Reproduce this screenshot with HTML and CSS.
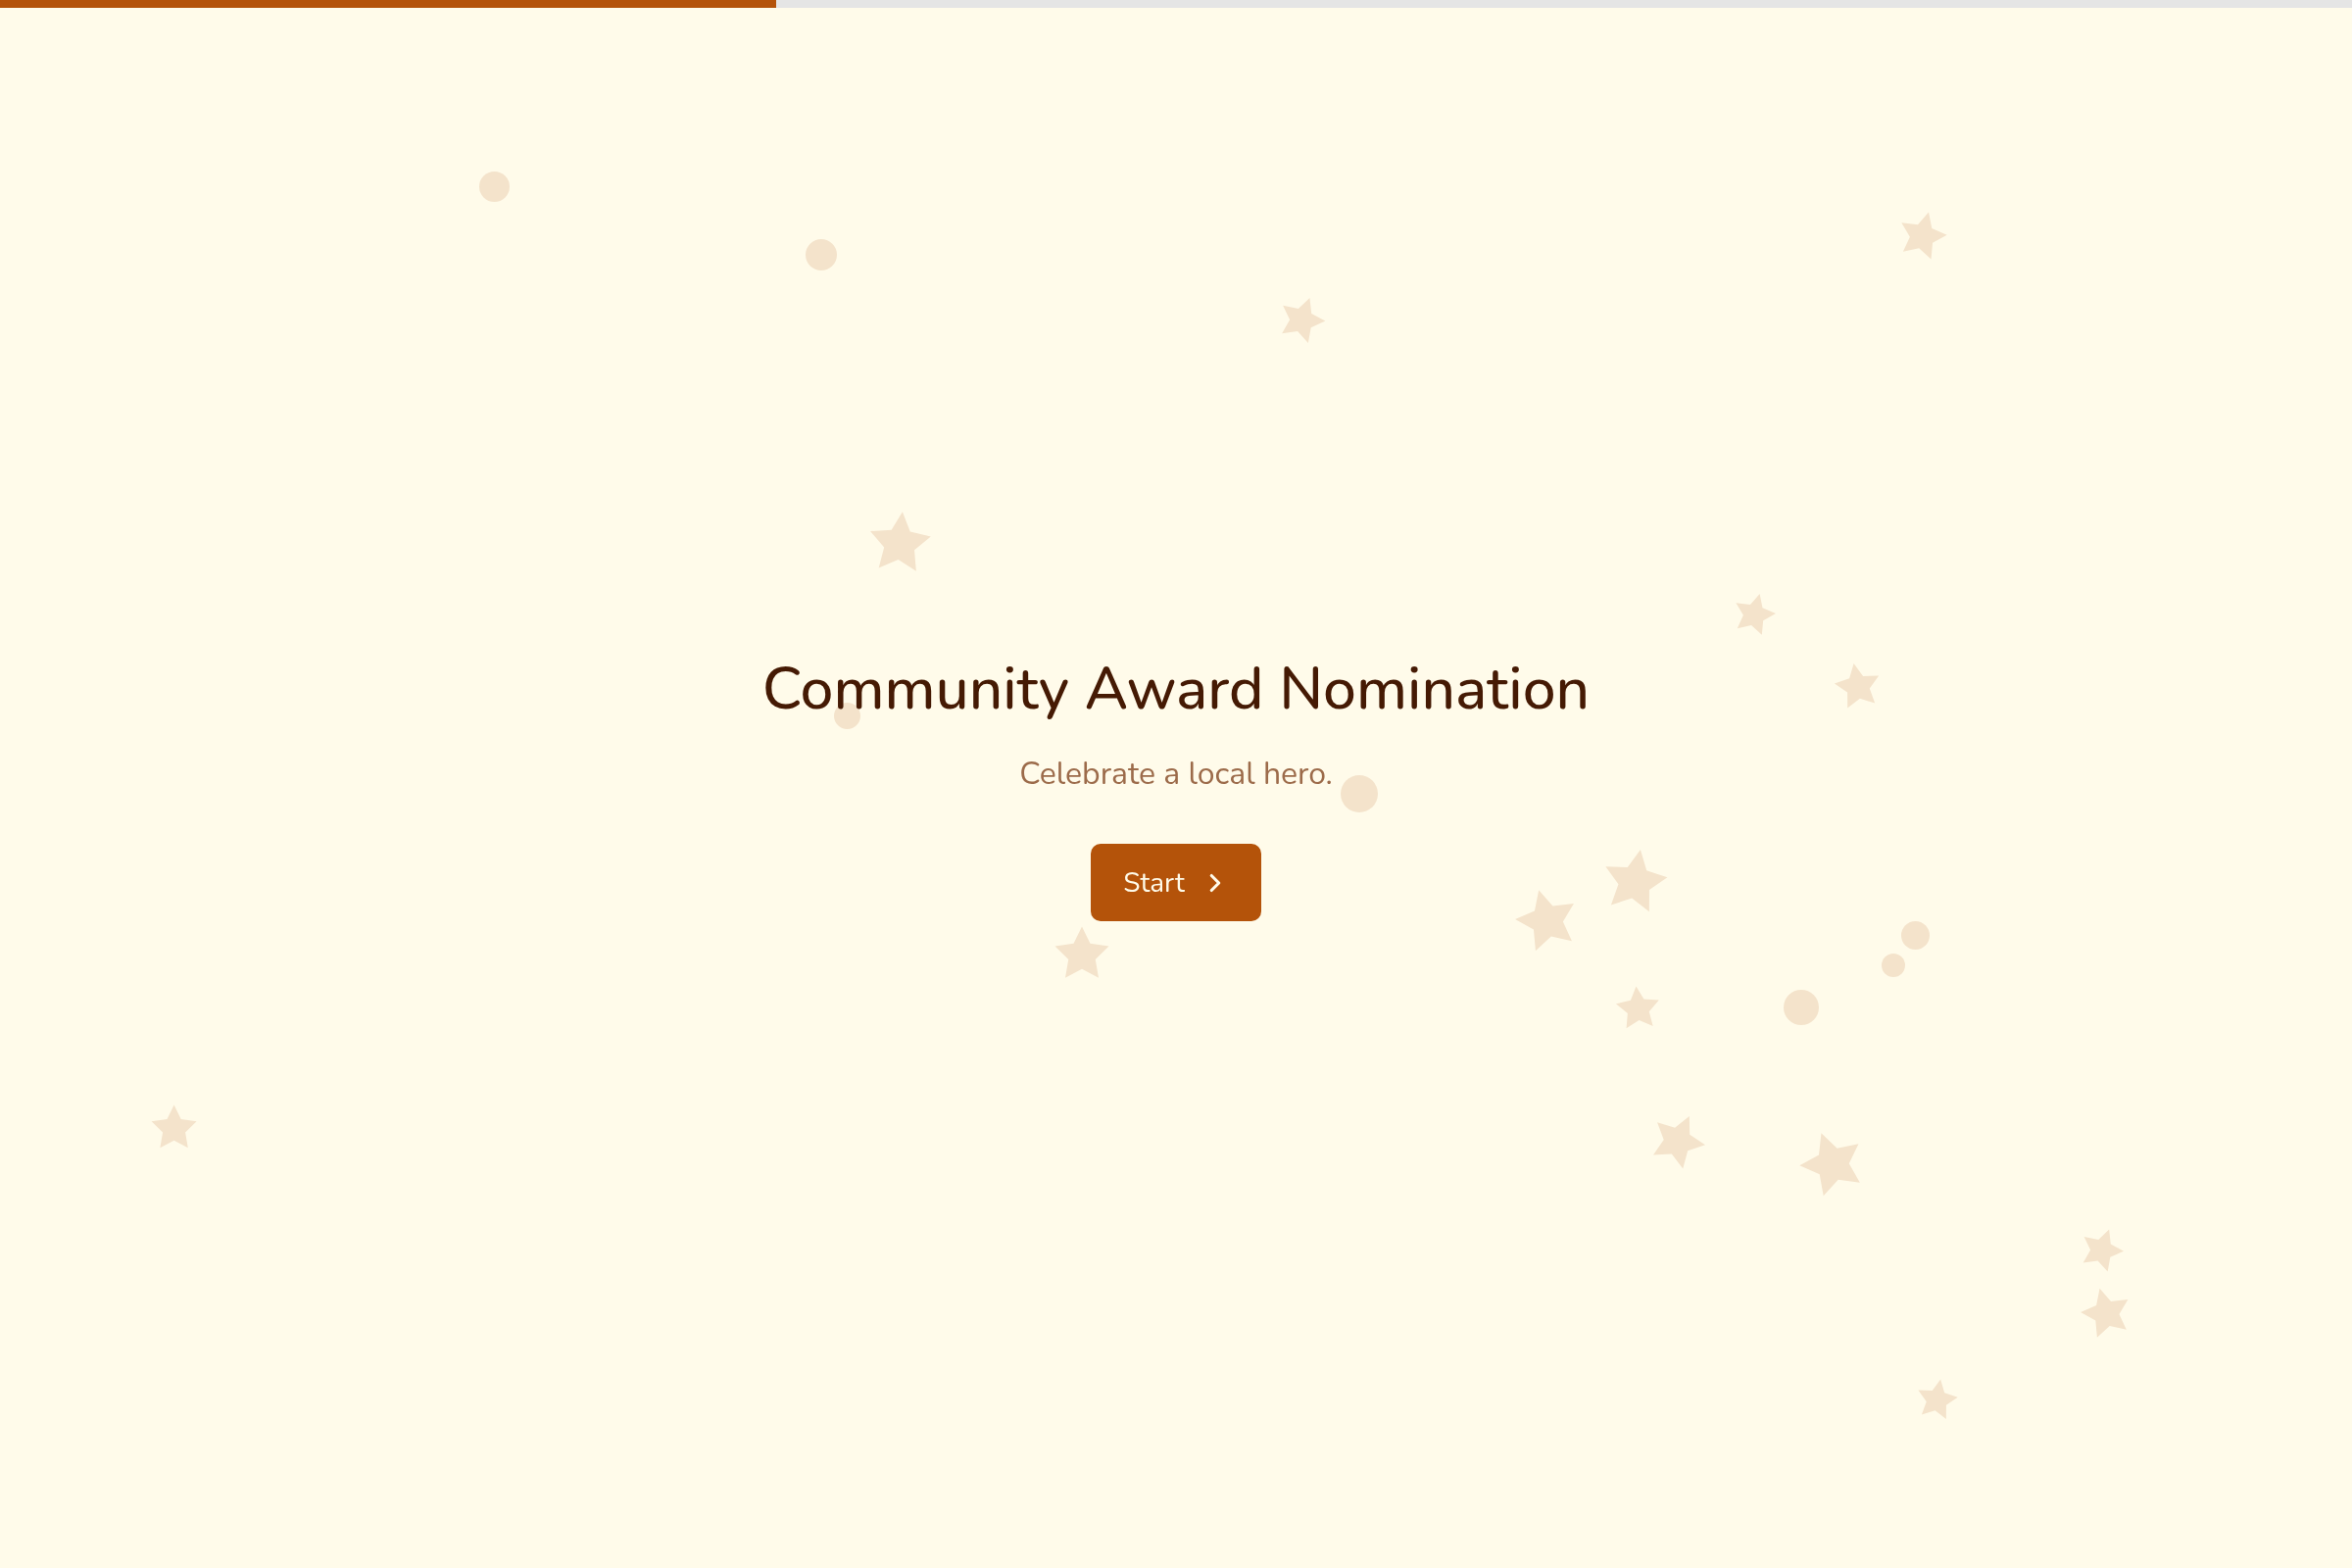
FILE: index.html
```html
<!DOCTYPE html>
<html lang="en">

<head>
    <meta charset="UTF-8">
    <meta name="viewport" content="width=device-width, initial-scale=1.0">
    <title>Community Award Nomination</title>
    <link rel="stylesheet" href="styles.css">
</head>

<body>
    <div class="progress">
        <div class="progress-fill" style="width: 33%"></div>
    </div>

    <div class="confetti" id="confetti"></div>

    <main class="intro">
        <h1 class="intro-title">Community Award Nomination</h1>
        <p class="intro-sub">Celebrate a local hero.</p>
        <button type="button" class="start-btn">
            <span>Start</span>
            <svg class="start-icon" viewBox="0 0 24 24" fill="none" stroke="currentColor" stroke-width="2.5"
                stroke-linecap="round" stroke-linejoin="round">
                <path d="M9 6l6 6-6 6" />
            </svg>
        </button>
    </main>

    <script>
        // background stars: x, y, size, rotation
        var stars = [
            [1329, 326, 46, 20], [1962, 240, 48, 15], [918, 553, 62, 5],
            [1790, 626, 42, 15], [1896, 700, 46, -10], [1668, 898, 64, 10],
            [1578, 938, 62, -15], [1104, 973, 55, 0], [1671, 1028, 44, -5],
            [178, 1151, 46, 0], [1712, 1163, 54, 25], [1869, 1186, 64, -20],
            [2145, 1275, 43, 20], [2149, 1339, 50, -15], [1977, 1428, 41, 10]
        ];
        // background dots: x, y, diameter
        var dots = [
            [504, 190, 31], [838, 260, 32], [864, 730, 27], [1387, 810, 38],
            [1954, 954, 29], [1932, 985, 24], [1838, 1028, 36]
        ];

        var layer = document.getElementById("confetti");
        var starShape = '<svg viewBox="0 0 24 24"><polygon points="12,2 15.09,8.26 22,9.27 17,14.14 18.18,21.02 12,17.77 5.82,21.02 7,14.14 2,9.27 8.91,8.26"/></svg>';

        stars.forEach(function (s) {
            var size = s[2] * 1.2;
            var el = document.createElement("div");
            el.className = "star";
            el.innerHTML = starShape;
            el.style.cssText = "left:" + (s[0] - size / 2) + "px;top:" + (s[1] - size / 2) + "px;width:" + size + "px;height:" + size + "px;transform:rotate(" + s[3] + "deg)";
            layer.appendChild(el);
        });

        dots.forEach(function (d) {
            var el = document.createElement("div");
            el.className = "dot";
            el.style.cssText = "left:" + (d[0] - d[2] / 2) + "px;top:" + (d[1] - d[2] / 2) + "px;width:" + d[2] + "px;height:" + d[2] + "px";
            layer.appendChild(el);
        });
    </script>
</body>

</html>
```

FILE: styles.css
```css
html,
body {
    margin: 0;
    padding: 0;
}

body {
    background-color: #fffbea;
    font-family: "Nunito", "Lato", "Noto Sans", sans-serif;
    min-height: 100vh;
    overflow: hidden;
}

.progress {
    position: fixed;
    top: 0;
    left: 0;
    right: 0;
    height: 8px;
    background-color: #e5e5e5;
    z-index: 2;
}

.progress-fill {
    height: 100%;
    background-color: #b4530a;
}

.confetti {
    position: fixed;
    inset: 0;
    pointer-events: none;
    z-index: 0;
}

.star {
    position: absolute;
}

.star svg {
    display: block;
    width: 100%;
    height: 100%;
    fill: #f4e3cb;
}

.dot {
    position: absolute;
    border-radius: 50%;
    background-color: #f4e3cb;
}

.intro {
    position: relative;
    z-index: 1;
    box-sizing: border-box;
    min-height: 100vh;
    padding-top: 7px;
    display: flex;
    flex-direction: column;
    align-items: center;
    justify-content: center;
    text-align: center;
}

.intro-title {
    margin: 0;
    font-size: 60.5px;
    font-weight: 500;
    line-height: 1.2;
    color: #451a04;
}

.intro-sub {
    margin: 29px 0 0;
    font-size: 32px;
    line-height: 1.4;
    color: #9c6b4a;
}

.start-btn {
    margin-top: 48px;
    height: 79px;
    padding: 0 32px 0 33px;
    display: inline-flex;
    align-items: center;
    gap: 16px;
    border: none;
    border-radius: 10px;
    background-color: #b4530a;
    color: #fffbea;
    font-family: inherit;
    font-size: 28px;
    cursor: pointer;
}

.start-icon {
    width: 30px;
    height: 30px;
}
```
